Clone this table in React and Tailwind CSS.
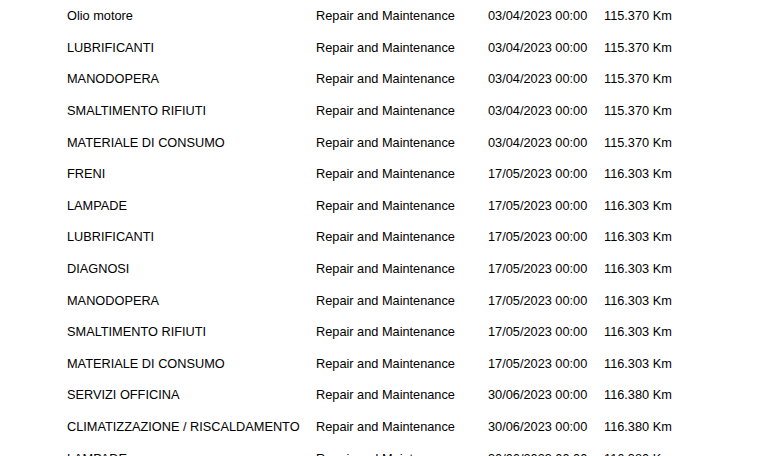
const rows = [
    ['Olio motore', '03/04/2023 00:00', '115.370 Km'],
    ['LUBRIFICANTI', '03/04/2023 00:00', '115.370 Km'],
    ['MANODOPERA', '03/04/2023 00:00', '115.370 Km'],
    ['SMALTIMENTO RIFIUTI', '03/04/2023 00:00', '115.370 Km'],
    ['MATERIALE DI CONSUMO', '03/04/2023 00:00', '115.370 Km'],
    ['FRENI', '17/05/2023 00:00', '116.303 Km'],
    ['LAMPADE', '17/05/2023 00:00', '116.303 Km'],
    ['LUBRIFICANTI', '17/05/2023 00:00', '116.303 Km'],
    ['DIAGNOSI', '17/05/2023 00:00', '116.303 Km'],
    ['MANODOPERA', '17/05/2023 00:00', '116.303 Km'],
    ['SMALTIMENTO RIFIUTI', '17/05/2023 00:00', '116.303 Km'],
    ['MATERIALE DI CONSUMO', '17/05/2023 00:00', '116.303 Km'],
    ['SERVIZI OFFICINA', '30/06/2023 00:00', '116.380 Km'],
    ['CLIMATIZZAZIONE / RISCALDAMENTO', '30/06/2023 00:00', '116.380 Km'],
    ['LAMPADE', '30/06/2023 00:00', '116.380 Km'],
];

export default function App() {
    return (
        <div className="w-[762px] h-[456px] overflow-hidden bg-white text-black font-['Liberation_Sans',Arial,sans-serif] text-[12.75px]">
            <div className="pl-[67px]">
                {rows.map((r, i) => (
                    <div key={i} className="grid grid-cols-[249px_172px_116px_auto] h-[31.6px] items-center whitespace-nowrap">
                        <div>{r[0]}</div>
                        <div>Repair and Maintenance</div>
                        <div>{r[1]}</div>
                        <div>{r[2]}</div>
                    </div>
                ))}
            </div>
        </div>
    );
}
